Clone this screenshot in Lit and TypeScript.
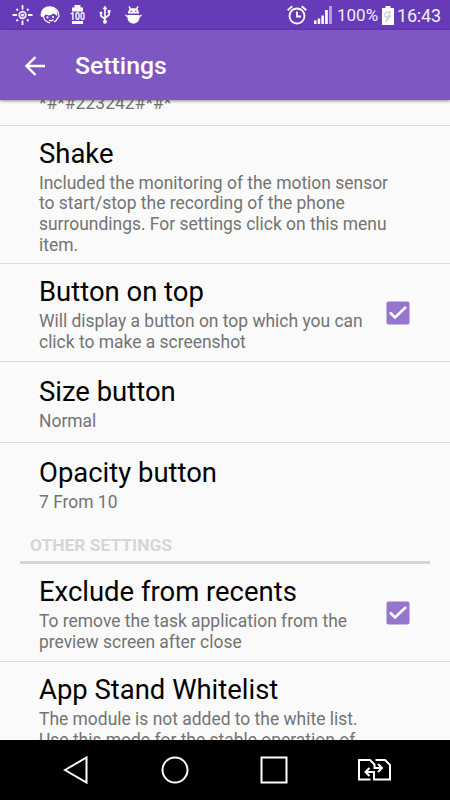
import { LitElement, html, css, nothing } from "lit";
import { customElement, property } from "lit/decorators.js";

@customElement("status-bar")
class StatusBar extends LitElement {
  static styles = css`
    :host { display: flex; align-items: center; justify-content: space-between; height: 30px; background: #673ab7; color: #fff; box-sizing: border-box; }
    svg { display: block; flex: none; }
    .left { display: flex; align-items: center; padding-left: 12px; }
    .sun { margin-right: 7px; }
    .face { margin-right: 10px; }
    .batt { margin-right: 14px; }
    .usb { margin-right: 14px; }
    .right { display: flex; align-items: center; padding-right: 9px; }
    .alarm { margin-right: 7px; }
    .signal { margin-right: 5px; }
    .pct { font-size: 17px; width: 41px; margin-right: 4px; white-space: nowrap; color: #f1ebf8; }
    .charge { margin-right: 3px; }
    .time { font-size: 18px; width: 44px; white-space: nowrap; letter-spacing: -0.2px; color: #f4effa; }
    .num { font: bold 10px "Roboto", sans-serif; }
  `;
  render() {
    return html`
      <div class="left">
        <svg class="sun" width="21" height="22" viewBox="0 0 21 22" fill="none" stroke="#fff" stroke-width="1.800">
          <circle cx="10.5" cy="11" r="3.300" stroke-width="1.800" stroke="#efe8f8"/><circle cx="10.5" cy="11" r="1.500" fill="#fff" stroke="none"/>
          <path d="M10.5 1v4.500M10.5 16.500V21M.5 11H5M16 11h4.500M4.500 5l1.500 1.500M16.500 5L15 6.500M4.500 17L6 15.500M16.500 17L15 15.500"/>
        </svg>
        <svg class="face" width="20" height="20" viewBox="0 0 20 20" fill="none" stroke="#fff" stroke-width="1.300">
          <path d="M1 10.500C1.500 5 5 2 10 2c5.500 0 9 4 9 9l-1.500 2.500" />
          <path d="M1 11C1.500 5 5 2 9.500 2c4 0 7 2.500 8 6l-.5 3-3-2.500-4.500 2L5.500 9.500 3.500 12H1.500z" fill="#fff" stroke="none"/>
          <path d="M3.500 11.500c.5 3.500 2.500 5.500 6.500 6.300M9 15.200q2.500 1.300 4.500-.7M17.500 13c-.5 2-1.500 3-3.500 4"/>
          <circle cx="7.500" cy="12.300" r="1.100" fill="#fff" stroke="none"/><circle cx="13" cy="12" r="1.100" fill="#fff" stroke="none"/>
        </svg>
        <svg class="batt" width="15" height="20" viewBox="0 0 15 20" fill="#fff">
          <path d="M4.500 0h6v2.500h2.500v4H2v-4h2.500zM2 16h11v3H2z"/>
          <text class="num" x="0" y="14.800" textLength="15" lengthAdjust="spacingAndGlyphs">100</text>
        </svg>
        <svg class="usb" width="12" height="20" viewBox="0 0 12 20" fill="none" stroke="#fff" stroke-width="1.600">
          <path d="M6 3v13M6 14l-4-3V8M6 13l4-3V6"/>
          <path d="M6 .5l2.400 3.700H3.600z" fill="#fff" stroke="none"/><circle cx="6" cy="16.800" r="2" fill="#fff" stroke="none"/>
          <circle cx="2" cy="8" r="1.500" fill="#fff" stroke="none"/><rect x="8.700" y="5" width="2.800" height="2.800" fill="#fff" stroke="none"/>
        </svg>
        <svg width="17" height="18" viewBox="0 0 17 18" fill="#fff">
          <path d="M3 7.500C3 4 5 2.300 8.500 2.300S14 4 14 7.500zM2.500 9h12v2.500c0 3.500-2.500 6-6 6s-6-2.500-6-6z"/>
          <path d="M4 .5l1.500 2.500M13 .5L11.500 3M.5 9l2.500 2M16.500 9L14 11" stroke="#fff" stroke-width="1.500"/>
          <circle cx="6.200" cy="5.300" r=".8" fill="#673ab7"/><circle cx="10.800" cy="5.300" r=".8" fill="#673ab7"/>
        </svg>
      </div>
      <div class="right">
        <svg class="alarm" width="20" height="20" viewBox="0 0 20 20" fill="none" stroke="#fff" stroke-width="1.800">
          <circle cx="10" cy="11" r="7.500"/><path d="M10 6.500V11.500h4M.7 5.200L5.300 1.200M19.300 5.200L14.700 1.200"/>
        </svg>
        <svg class="signal" width="18" height="18" viewBox="0 0 18 18" fill="#fff">
          <path d="M0 14.500h2.500V18H0zM3.700 12.500h2.500V18H3.700zM7.400 9.500h2.500V18H7.400zM11.100 4h2.700v14h-2.700z"/><path d="M15 0h3v18h-3z" opacity=".5"/>
        </svg>
        <span class="pct">100%</span>
        <svg class="charge" width="12" height="19" viewBox="0 0 12 19">
          <path d="M3.500 0h5v2H12v17H0V2h3.500z" fill="#fff"/><path d="M8.500 5.500L3 7.200v4l3-.7-2 5 5-5.700-3 .5z" fill="none" stroke="#c4c0c8" stroke-width="1"/>
        </svg>
        <span class="time">16:43</span>
      </div>`;
  }
}

@customElement("setting-row")
class SettingRow extends LitElement {
  @property() heading = "";
  @property({ attribute: false }) lines: string[] = [];
  @property({ type: Boolean }) checked = false;
  static styles = css`
    :host { display: flex; align-items: center; box-sizing: border-box; min-height: 81px; padding: 12px 40px 8px 39px; border-bottom: 1px solid #d9d9d9; }
    .text { flex: 1; white-space: nowrap; }
    .heading { font-size: 27.45px; line-height: 32px; margin-bottom: 3px; color: #000; }
    .line { font-size: 17.45px; line-height: 20.6px; color: #737373; }
    svg { display: block; flex: none; margin-bottom: 4px; }
  `;
  render() {
    return html`<div class="text">
        <div class="heading">${this.heading}</div>
        ${this.lines.map((l) => html`<div class="line">${l}</div>`)}
      </div>
      ${this.checked ? html`<svg width="24" height="24" viewBox="0 0 24 24"><rect x=".5" y=".5" width="23" height="23" rx="2" fill="#9575cd"/><path d="M4 11.500l5 5L20 6" fill="none" stroke="#fff" stroke-width="2.500"/></svg>` : nothing}`;
  }
}

@customElement("app-root")
class AppRoot extends LitElement {
  static styles = css`
    :host { display: flex; flex-direction: column; width: 450px; height: 800px; overflow: hidden; background: #fafafa; font-family: "Roboto", sans-serif; }
    .bar { flex: none; height: 70px; display: flex; align-items: center; background: #7e57c2; color: #fff; padding: 1px 0 0 25px; box-sizing: border-box; box-shadow: 0 1px 3px rgba(0,0,0,.45); z-index: 1; }
    .title { font-size: 24.8px; font-weight: 500; margin-left: 30px; }
    .list { flex: 1; min-height: 0; overflow: hidden; }
    .code { height: 26px; border-bottom: 1px solid #d9d9d9; box-sizing: border-box; padding-left: 39px; font-size: 17.5px; line-height: 7px; color: #737373; }
    .first { height: 138px; }
    .pair { height: 98px; }
    .section { margin: 0 20px; height: 40px; box-sizing: border-box; padding: 11px 0 0 10px; border-bottom: 3px solid #d6d6d6; font-size: 17.4px; line-height: 21px; font-weight: 700; color: #d6d6d6; }
    .last { border-bottom-color: transparent; }
    .nav { flex: none; height: 60px; background: #000; display: flex; align-items: center; gap: 69px; padding-left: 62px; }
    .nav svg { display: block; flex: none; }
    .nav .swap { margin-left: -1px; }
  `;
  render() {
    return html`
      <status-bar></status-bar>
      <div class="bar">
        <svg width="20" height="20" viewBox="0 0 20 20" fill="none" stroke="#fff" stroke-width="2.400"><path d="M20 10H2M10.500 1L1.500 10l9 9"/></svg>
        <span class="title">Settings</span>
      </div>
      <div class="list">
        <div class="code">*#*#223242#*#*</div>
        <setting-row class="first" heading="Shake" .lines=${["Included the monitoring of the motion sensor", "to start/stop the recording of the phone", "surroundings. For settings click on this menu", "item."]}></setting-row>
        <setting-row class="pair" checked heading="Button on top" .lines=${["Will display a button on top which you can", "click to make a screenshot"]}></setting-row>
        <setting-row heading="Size button" .lines=${["Normal"]}></setting-row>
        <setting-row class="last" heading="Opacity button" .lines=${["7 From 10"]}></setting-row>
        <div class="section">OTHER SETTINGS</div>
        <setting-row class="pair" checked heading="Exclude from recents" .lines=${["To remove the task application from the", "preview screen after close"]}></setting-row>
        <setting-row class="last" heading="App Stand Whitelist" .lines=${["The module is not added to the white list.", "Use this mode for the stable operation of"]}></setting-row>
      </div>
      <div class="nav">
        <svg width="29" height="30" viewBox="0 0 29 30" fill="none" stroke="#fff" stroke-width="2"><path d="M3 15L24.500 2.500v25z"/></svg>
        <svg width="30" height="30" viewBox="0 0 30 30" fill="none" stroke="#fff" stroke-width="2"><circle cx="15" cy="15" r="12.500"/></svg>
        <svg width="30" height="30" viewBox="0 0 30 30" fill="none" stroke="#fff" stroke-width="2"><path d="M2.500 2.500h25v25h-25z"/></svg>
        <svg class="swap" width="34" height="24" viewBox="0 0 34 24" fill="none" stroke="#fff" stroke-width="2"><path d="M13.500 21.500H2V2h11l4.500 4.500V10h7M18.500 2H28l5 5v14.500H17V14H9M21 6l4 4-4 4M12.500 10l-4 4 4 4"/></svg>
      </div>`;
  }
}
